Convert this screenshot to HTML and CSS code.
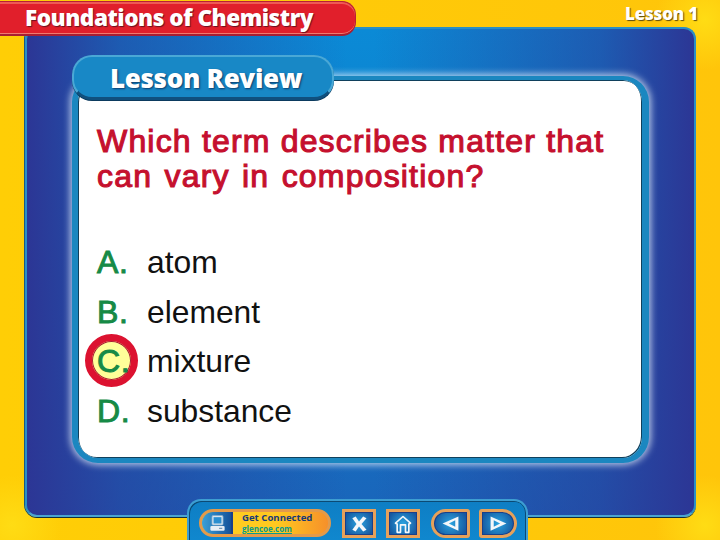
FILE: index.html
```html
<!DOCTYPE html>
<html lang="en">
<head>
<meta charset="utf-8">
<title>Lesson Review</title>
<link rel="stylesheet" href="styles.css">
</head>
<body>
<main class="slide">
  <header class="chapter"><span class="chapter-text">Foundations of Chemistry</span></header>
  <div class="lesson-tag">Lesson 1</div>
  <section class="frame">
    <div class="card">
      <h1 class="question">Which term describes matter that<br><span class="wide-words">can vary in composition?</span></h1>
      <ol class="options">
        <li class="option"><span class="letter">A.</span><span>atom</span></li>
        <li class="option"><span class="letter">B.</span><span>element</span></li>
        <li class="option"><span class="letter correct">C.</span><span>mixture</span></li>
        <li class="option"><span class="letter">D.</span><span>substance</span></li>
      </ol>
    </div>
  </section>
  <h2 class="review-pill">Lesson Review</h2>
  <nav class="toolbar">
    <div class="connect">
      <span class="connect-icon">
        <svg viewBox="0 0 24 24" width="19" height="19"><rect x="5" y="2" width="14" height="12" rx="1.500" fill="#dfe9f2" stroke="#7fa9c8"/><rect x="7" y="4" width="10" height="8" fill="#2a8fd0"/><rect x="3" y="15" width="18" height="6" rx="1.500" fill="#e6eef5"/><rect x="14" y="17.500" width="4" height="1" fill="#3a6a90"/></svg>
      </span>
      <span class="connect-text"><b>Get Connected</b><u>glencoe.com</u></span>
    </div>
    <div class="btn square first">
      <svg viewBox="0 0 24 24" width="20" height="20"><path d="M4 5 L8 3 L12 9 L17 3 L21 5 L15 12 L21 19 L17 21 L12 15 L8 21 L4 19 L9 12 Z" fill="#f4f7fa"/></svg>
    </div>
    <div class="btn square home">
      <svg viewBox="0 0 24 24" width="20" height="20"><path d="M12 3 L21 11 L19 12 L19 22 L15 22 L15 13 L9 13 L9 22 L5 22 L5 12 L3 11 Z" fill="none" stroke="#f4f7fa" stroke-width="2" stroke-linejoin="round"/></svg>
    </div>
    <div class="btn prev">
      <svg viewBox="0 0 24 24" width="19" height="19"><path d="M2 12 L22 3 L22 21 Z M10 12 L18 16 L18 8 Z" fill="#f4f7fa" fill-rule="evenodd"/></svg>
    </div>
    <div class="btn next">
      <svg viewBox="0 0 24 24" width="19" height="19"><path d="M22 12 L2 3 L2 21 Z M14 12 L6 16 L6 8 Z" fill="#f4f7fa" fill-rule="evenodd"/></svg>
    </div>
  </nav>
</main>
</body>
</html>
```
FILE: styles.css
```css
*, *::before { box-sizing: border-box; }
html, body { margin: 0; padding: 0; }
.slide {
  position: relative;
  width: 720px;
  height: 540px;
  overflow: hidden;
  padding: 27px 24px 23px 25px;
  background:
    radial-gradient(circle 50px at 12px 525px, #ffdc14, rgba(255,220,20,0)),
    radial-gradient(circle 50px at 705px 525px, #ffdc14, rgba(255,220,20,0)),
    radial-gradient(circle 50px at 705px 20px, #ffdc14, rgba(255,220,20,0)),
    linear-gradient(90deg, #ffce06 0%, #ffc50a 100%);
  font-family: "Liberation Sans", Arial, sans-serif;
}
.chapter {
  position: absolute;
  left: -6px;
  top: 1px;
  width: 362px;
  height: 35px;
  padding: 1px 0 0 31px;
  background: #e11f2b;
  border: 1px solid #b82036;
  border-bottom: 2px solid #a81e32;
  border-radius: 0 14px 14px 0;
  box-shadow: inset 0 2px 0 #ee5a55, inset 0 -1px 0 #f07a70;
  z-index: 3;
}
.chapter-text, .lesson-tag, .review-pill {
  font-family: "Open Sans", "Noto Sans", sans-serif;
  font-weight: 800;
  color: #fff;
}
.chapter-text {
  font-size: 22.600px;
  line-height: 29px;
  letter-spacing: -0.500px;
  margin-left: -1px;
  text-shadow: 1px 1px 1px #6a1020;
}
.lesson-tag {
  position: absolute;
  left: 625px;
  top: 4px;
  font-size: 17px;
  line-height: 20px;
  letter-spacing: -0.200px;
  text-shadow: 1px 1px 1px #5a4a10;
}
.frame {
  width: 671px;
  height: 490px;
  padding: 47px 45px 52px 45px;
  border: 2px solid #2a8fc4;
  border-bottom-color: #4aa5d0;
  border-radius: 12px;
  background:
    linear-gradient(90deg, #2c3695 0%, rgba(44,54,149,0.55) 14%, rgba(44,54,149,0) 48%, rgba(44,54,149,0) 52%, rgba(44,54,149,0.55) 86%, #2c3695 100%),
    linear-gradient(180deg, #0b8ad6 0%, #0f7ecb 40%, #1a65ba 100%);
  box-shadow: 0 1px 0 #12303f, -1px 0 0 #1a5a80;
}
.card {
  height: 387px;
  padding: 44px 19px 0 19px;
  background: #fff;
  border-style: solid;
  border-color: #1b87c0;
  border-width: 4px 7px 5px 6px;
  border-radius: 26px;
  box-shadow: 0 0 7px 2px rgba(230,240,250,0.75), inset 1px 1px 0 #10405c, inset -1px -1px 0 #10405c;
}
.question {
  margin: 0;
  font-size: 32px;
  line-height: 35px;
  font-weight: 400;
  color: #c5102e;
  letter-spacing: 1.180px;
  -webkit-text-stroke: 1.100px #c5102e;
}
.wide-words { word-spacing: 2.300px; }
.options {
  list-style: none;
  margin: 44px 0 0;
  padding: 0;
}
.option {
  display: flex;
  align-items: center;
  height: 49.500px;
  font-size: 31.800px;
  color: #111;
}
.letter {
  position: relative;
  width: 50px;
  color: #168a46;
  font-size: 32px;
  letter-spacing: 0.600px;
  -webkit-text-stroke: 1px #168a46;
}
.correct { z-index: 0; }
.correct::before {
  content: "";
  position: absolute;
  z-index: -1;
  left: -12px;
  top: -9px;
  width: 53px;
  height: 53px;
  border-radius: 50%;
  background: #ffff99;
  border: 7px solid #dc1230;
  box-shadow: inset 0 0 0 1px #a81e32;
}
.review-pill {
  position: absolute;
  left: 72px;
  top: 55px;
  width: 262px;
  height: 45px;
  margin: 0;
  padding-left: 36px;
  font-size: 26px;
  line-height: 42px;
  letter-spacing: -0.350px;
  background: #1888c6;
  border: 2px solid #4aa8d6;
  border-bottom: 3px solid #10507e;
  border-radius: 20px;
  box-shadow: 0 1px 0 #0b3a5e;
  text-shadow: 1px 1px 2px #0b3a6a;
}
.toolbar {
  position: absolute;
  left: 187px;
  top: 499px;
  width: 341px;
  height: 44px;
  padding: 8px 0 0 10px;
  display: flex;
  align-items: flex-start;
  background: linear-gradient(180deg, #0e7ec4, #1088cf);
  border: 2px solid #3d9ed2;
  border-bottom: 0;
  border-radius: 14px 14px 0 0;
  box-shadow: inset 1px 1px 0 #0b4a74, inset -1px 0 0 #0b4a74;
}
.connect {
  flex: none;
  width: 132px;
  height: 28px;
  display: flex;
  border: 3px solid #e39a4a;
  border-radius: 14px;
  overflow: hidden;
  background: linear-gradient(90deg, #ffd020 0%, #ffc820 60%, #f6902a 100%);
}
.connect-icon {
  flex: none;
  width: 31px;
  margin-right: 9px;
  padding: 2px 0 0 6px;
  background: linear-gradient(90deg, #3aa0d8, #14529a);
  border-right: 2px solid #1a3f8a;
}
.connect-text {
  display: flex;
  flex-direction: column;
  font-family: "Open Sans", sans-serif;
}
.connect-text b {
  color: #173a78;
  font-size: 9.600px;
  line-height: 12px;
  white-space: nowrap;
}
.connect-text u {
  color: #0a9a8e;
  font-weight: 700;
  font-size: 8px;
  line-height: 10px;
  white-space: nowrap;
}
.btn {
  display: flex;
  align-items: center;
  justify-content: center;
  flex: none;
  height: 29px;
  background: radial-gradient(circle at 50% 50%, #2ba4e0 0%, #15579f 85%);
  border: 3px solid #e6a15a;
  box-shadow: inset 0 0 0 1px #1a3f8a;
}
.square { width: 34px; }
.first { margin-left: 11px; }
.home { margin-left: 10px; }
.prev { width: 39px; margin-left: 11px; border-radius: 15px 3px 3px 15px; }
.next { width: 38px; margin-left: 9px; border-radius: 3px 15px 15px 3px; }
```
